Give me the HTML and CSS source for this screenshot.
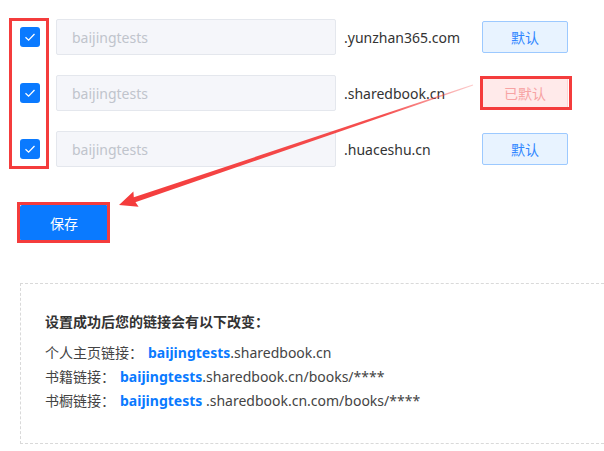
FILE: index.html
```html
<!DOCTYPE html>
<html lang="zh">
<head>
<meta charset="utf-8">
<title>域名设置</title>
<link rel="stylesheet" href="styles.css">
</head>
<body>
<div class="page">
  <div class="rows">
    <div class="row">
      <span class="checkbox"><svg viewBox="0 0 20 20" width="20" height="20"><path d="M5.5 10.3 L8.6 13.2 L14.5 7" fill="none" stroke="#fff" stroke-width="1.3"/></svg></span>
      <div class="input">baijingtests</div>
      <span class="domain">.yunzhan365.com</span>
      <button class="btn btn-default">默认</button>
    </div>
    <div class="row">
      <span class="checkbox"><svg viewBox="0 0 20 20" width="20" height="20"><path d="M5.5 10.3 L8.6 13.2 L14.5 7" fill="none" stroke="#fff" stroke-width="1.3"/></svg></span>
      <div class="input">baijingtests</div>
      <span class="domain">.sharedbook.cn</span>
      <button class="btn btn-active">已默认</button>
    </div>
    <div class="row">
      <span class="checkbox"><svg viewBox="0 0 20 20" width="20" height="20"><path d="M5.5 10.3 L8.6 13.2 L14.5 7" fill="none" stroke="#fff" stroke-width="1.3"/></svg></span>
      <div class="input">baijingtests</div>
      <span class="domain">.huaceshu.cn</span>
      <button class="btn btn-default">默认</button>
    </div>
  </div>

  <div class="actions">
    <button class="btn-save">保存</button>
  </div>

  <div class="notice">
    <p class="notice-title">设置成功后您的链接会有以下改变：</p>
    <p class="notice-line">个人主页链接：<b class="hl">baijingtests</b>.sharedbook.cn</p>
    <p class="notice-line">书籍链接：<b class="hl">baijingtests</b>.sharedbook.cn/books/****</p>
    <p class="notice-line">书橱链接：<b class="hl">baijingtests</b> .sharedbook.cn.com/books/****</p>
  </div>

  <div class="mark mark-checks"></div>
  <div class="mark mark-default"></div>
  <div class="mark mark-save"></div>
  <svg class="arrow" width="604" height="451" viewBox="0 0 604 451">
    <defs>
      <linearGradient id="fade" x1="473" y1="85" x2="119" y2="205" gradientUnits="userSpaceOnUse">
        <stop offset="0" stop-color="#f43c3c" stop-opacity="0.25"/>
        <stop offset="0.25" stop-color="#f43c3c" stop-opacity="0.9"/>
        <stop offset="1" stop-color="#f43c3c"/>
      </linearGradient>
    </defs>
    <polygon points="473.2,85.5 472.8,84.5 131.5,198.1 133.1,202.9" fill="url(#fade)"/>
    <polygon points="119,205 133.4,191.6 134,200 138.6,206.8" fill="#f43c3c"/>
  </svg>
</div>
</body>
</html>
```

FILE: styles.css
```css
html, body {
  margin: 0;
  padding: 0;
  background: #fff;
  overflow: hidden;
}

body {
  font-family: "Noto Sans", "Noto Sans CJK SC", sans-serif;
  font-size: 14px;
  color: #333;
}

.page {
  position: relative;
  width: 604px;
  height: 451px;
  padding: 19px 0 0 20px;
  box-sizing: border-box;
}

.rows {
  display: flex;
  flex-direction: column;
  gap: 20px;
}

.row {
  display: flex;
  align-items: center;
  height: 36px;
}

.checkbox {
  width: 20px;
  height: 20px;
  border-radius: 3px;
  background: #0a7aff;
  display: flex;
  margin-right: 16px;
}

.input {
  width: 280px;
  height: 36px;
  box-sizing: border-box;
  border: 1px solid #e4e7ed;
  border-radius: 2px;
  background: #f5f6fa;
  color: #c0c4cc;
  padding-left: 15px;
  display: flex;
  align-items: center;
  font-size: 14px;
}

.domain {
  width: 138px;
  margin-left: 8px;
  font-size: 14px;
  color: #333;
}

.btn {
  width: 86px;
  height: 32px;
  box-sizing: border-box;
  border-radius: 2px;
  font-family: inherit;
  font-size: 14px;
  padding: 0;
  cursor: pointer;
}

.btn-default {
  background: #e8f3ff;
  border: 1px solid #9cc9ff;
  color: #2f86ff;
}

.btn-active {
  background: #ffeaea;
  border: 1px solid #ffd3d3;
  color: #f7a3a3;
}

.actions {
  margin-top: 38px;
  display: flex;
}

.btn-save {
  width: 88px;
  height: 36px;
  border: none;
  border-radius: 2px;
  background: #0a7aff;
  color: #fff;
  font-family: inherit;
  font-size: 14px;
  padding: 0;
}

.notice {
  margin-top: 42px;
  height: 161px;
  box-sizing: border-box;
  border: 1px dashed #d9d9d9;
  border-right: none;
  padding: 26px 24px 0 24px;
}

.notice p {
  margin: 0;
  line-height: 24px;
}

.notice-title {
  font-weight: bold;
  color: #333;
  margin-bottom: 7px !important;
}

.notice-line {
  color: #444;
}

.hl {
  color: #0a7aff;
  font-weight: bold;
  margin-left: 5px;
}

.mark {
  position: absolute;
  border: 3px solid #f43c3c;
  box-sizing: border-box;
}

.mark-checks {
  left: 9px;
  top: 18px;
  width: 40px;
  height: 151px;
}

.mark-default {
  left: 480px;
  top: 76px;
  width: 92px;
  height: 34px;
}

.mark-save {
  left: 17px;
  top: 202px;
  width: 93px;
  height: 41px;
}

.arrow {
  position: absolute;
  left: 0;
  top: 0;
  pointer-events: none;
}
```
